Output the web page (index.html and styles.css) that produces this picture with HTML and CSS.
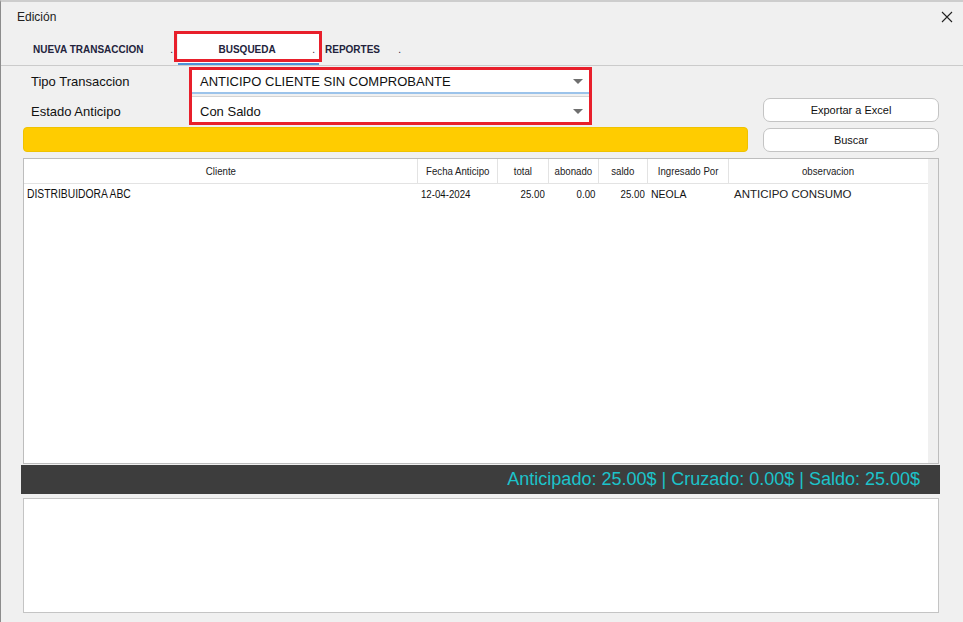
FILE: index.html
```html
<!DOCTYPE html>
<html lang="es">
<head>
<meta charset="utf-8">
<title>Edición</title>
<link rel="stylesheet" href="styles.css">
</head>
<body>
<div class="window">
  <header class="titlebar">
    <span class="title">Edición</span>
    <button class="close" aria-label="Cerrar">
      <svg width="12" height="12" viewBox="0 0 12 12"><path d="M1 1 L11 11 M11 1 L1 11" stroke="#222" stroke-width="1.1" fill="none"/></svg>
    </button>
  </header>

  <nav class="tabs">
    <div class="tab tab-new"><span>NUEVA TRANSACCION</span><span class="dot">.</span></div>
    <div class="tab tab-search active"><span class="tab-label">BUSQUEDA</span><span class="dot">.</span></div>
    <div class="tab tab-reports"><span>REPORTES</span><span class="dot">.</span></div>
  </nav>

  <section class="form">
    <div class="form-main">
      <div class="fields">
        <div class="labels">
          <label>Tipo Transaccion</label>
          <label>Estado Anticipo</label>
        </div>
        <div class="combo-group">
          <div class="combo combo-type"><span>ANTICIPO CLIENTE SIN COMPROBANTE</span><i class="arrow"></i></div>
          <div class="combo combo-state"><span>Con Saldo</span><i class="arrow"></i></div>
        </div>
      </div>
      <div class="progress"></div>
    </div>
    <div class="form-side">
      <button class="btn">Exportar a Excel</button>
      <button class="btn">Buscar</button>
    </div>
  </section>

  <section class="grid">
    <div class="grid-body">
      <div class="grid-row grid-head">
        <div class="cell"><span class="nw">Cliente</span></div>
        <div class="cell"><span class="nw">Fecha Anticipo</span></div>
        <div class="cell"><span class="nw">total</span></div>
        <div class="cell"><span class="nw">abonado</span></div>
        <div class="cell"><span class="nw">saldo</span></div>
        <div class="cell"><span class="nw">Ingresado Por</span></div>
        <div class="cell"><span class="nw">observacion</span></div>
      </div>
      <div class="grid-row grid-data">
        <div class="cell c-client"><span class="nw">DISTRIBUIDORA ABC</span></div>
        <div class="cell c-date"><span class="nw">12-04-2024</span></div>
        <div class="cell c-num"><span class="nw">25.00</span></div>
        <div class="cell c-num"><span class="nw">0.00</span></div>
        <div class="cell c-num c-last"><span class="nw">25.00</span></div>
        <div class="cell c-user">NEOLA</div>
        <div class="cell c-note">ANTICIPO CONSUMO</div>
      </div>
    </div>
    <div class="grid-gutter"></div>
  </section>

  <div class="summary">Anticipado: 25.00$ | Cruzado: 0.00$ | Saldo: 25.00$</div>

  <section class="detail"></section>
</div>
</body>
</html>
```

FILE: styles.css
```css
* { box-sizing: border-box; }

html, body {
  margin: 0;
  padding: 0;
}

body {
  width: 963px;
  height: 622px;
  overflow: hidden;
  background: #f0f0f0;
  font-family: "Liberation Sans", Arial, sans-serif;
  color: #111;
}

.window {
  height: 622px;
  border-top: 2px solid #cdcdcd;
  border-left: 1px solid #8c8c8c;
  background: #f0f0f0;
}

/* title bar */
.titlebar {
  height: 30px;
  display: flex;
  align-items: center;
  justify-content: space-between;
  padding: 0 9px 0 16px;
}

.title {
  font-size: 12px;
  color: #222;
}

.close {
  border: 0;
  background: transparent;
  padding: 0;
  width: 14px;
  height: 14px;
  display: flex;
  align-items: center;
  justify-content: center;
}

/* tab strip */
.tabs {
  height: 34px;
  display: flex;
  align-items: flex-end;
  padding-left: 19px;
  border-bottom: 1px solid #cbcbcb;
}

.tab {
  height: 31px;
  display: flex;
  align-items: center;
  padding-top: 1px;
  font-size: 10px;
  font-weight: 700;
  color: #23233c;
  border-bottom: 2px solid transparent;
  white-space: nowrap;
}

.tab .dot {
  font-weight: 400;
}

.tab-new {
  width: 158px;
  padding-left: 13px;
  padding-right: 5px;
  justify-content: space-between;
}

.tab-search {
  width: 141px;
  padding-left: 4px;
  padding-right: 4px;
}

.tab-search .tab-label {
  flex: 1;
  text-align: center;
}

.tab-reports {
  width: 83px;
  padding-left: 6px;
  padding-right: 1px;
  justify-content: space-between;
}

.tab.active {
  position: relative;
  background: #fff;
  border-bottom-color: #4f93d8;
}

/* red highlight frame drawn over the active tab */
.tab.active::after {
  content: "";
  position: absolute;
  left: -4px;
  right: -3px;
  top: -3px;
  bottom: 1px;
  border: 3px solid #e81f2b;
  pointer-events: none;
}

/* filter form */
.form {
  display: flex;
  padding: 0 24px 0 22px;
  margin-top: 1px;
}

.form-main {
  width: 725px;
}

.fields {
  display: flex;
  height: 58px;
}

.labels {
  width: 166px;
  padding: 7px 0 0 8px;
  display: flex;
  flex-direction: column;
  gap: 15px;
}

.labels label {
  font-size: 13px;
  line-height: 15px;
  color: #111;
}

.combo-group {
  width: 403px;
  border: 3px solid #e81f2b;
  display: flex;
  flex-direction: column;
  gap: 2px;
}

.combo {
  display: flex;
  align-items: center;
  justify-content: space-between;
  background: #fff;
  padding: 0 6px 0 8px;
  font-size: 13px;
  color: #111;
}

.combo-type {
  height: 24px;
  border-bottom: 2px solid #9cc3ea;
}

.combo-state {
  height: 26px;
  border-top: 1px solid #d4d4d4;
  padding-top: 3px;
}

.arrow {
  width: 0;
  height: 0;
  border-left: 5px solid transparent;
  border-right: 5px solid transparent;
  border-top: 5px solid #6f6f6f;
}

.progress {
  margin-top: 2px;
  height: 25px;
  background: #ffcc00;
  border: 1px solid #efc200;
  border-radius: 4px;
}

.form-side {
  margin-left: auto;
  width: 176px;
  align-self: flex-end;
  display: flex;
  flex-direction: column;
  gap: 6px;
}

.btn {
  height: 24px;
  width: 176px;
  background: #fff;
  border: 1px solid #c4c4c4;
  border-radius: 7px;
  font-family: "Liberation Sans", Arial, sans-serif;
  font-size: 11px;
  color: #111;
  padding: 0;
}

/* results grid */
.grid {
  margin: 6px 24px 0 22px;
  height: 306px;
  border: 1px solid #bdbdbd;
  display: flex;
}

.grid-body {
  width: 904px;
  background: #fff;
}

.grid-gutter {
  flex: 1;
  background: #f0f0f0;
}

.grid-row {
  display: grid;
  grid-template-columns: 393px 80px 51px 50px 49px 81px 200px;
}

/* narrow grid typeface */
.nw {
  display: inline-block;
  transform: scaleX(0.84);
  white-space: nowrap;
}

.grid-head {
  height: 25px;
  border-bottom: 1px solid #e3e3e3;
}

.grid-head .cell {
  display: flex;
  align-items: center;
  justify-content: center;
  font-size: 11.5px;
  color: #222;
}

.grid-head .cell + .cell {
  border-left: 1px solid #e3e3e3;
}

.grid-data {
  height: 20px;
}

.grid-data .cell {
  display: flex;
  align-items: center;
  font-size: 11.5px;
  color: #111;
  white-space: nowrap;
}

.c-client { padding-left: 3px; }
.grid-data .c-client { font-size: 12px; }
.c-client .nw,
.c-date .nw { transform-origin: left center; }
.c-client .nw { transform: scaleX(0.86); }
.c-date { padding-left: 4px; }
.c-num { justify-content: flex-end; padding-right: 3px; }
.c-num .nw { transform-origin: right center; }
.c-last { padding-right: 2px; }

.grid-data .c-user {
  padding-left: 4px;
  font-size: 10.5px;
}

.grid-data .c-note {
  padding-left: 6px;
  font-size: 11.5px;
  color: #222;
}

/* totals bar */
.summary {
  margin: 1px 23px 0 20px;
  height: 29px;
  background: #3d3d3d;
  color: #1cc3ca;
  font-size: 18px;
  display: flex;
  align-items: center;
  justify-content: flex-end;
  padding-right: 20px;
}

/* detail pane */
.detail {
  margin: 4px 24px 0 22px;
  height: 115px;
  background: #fff;
  border: 1px solid #c4c4c4;
}
```
